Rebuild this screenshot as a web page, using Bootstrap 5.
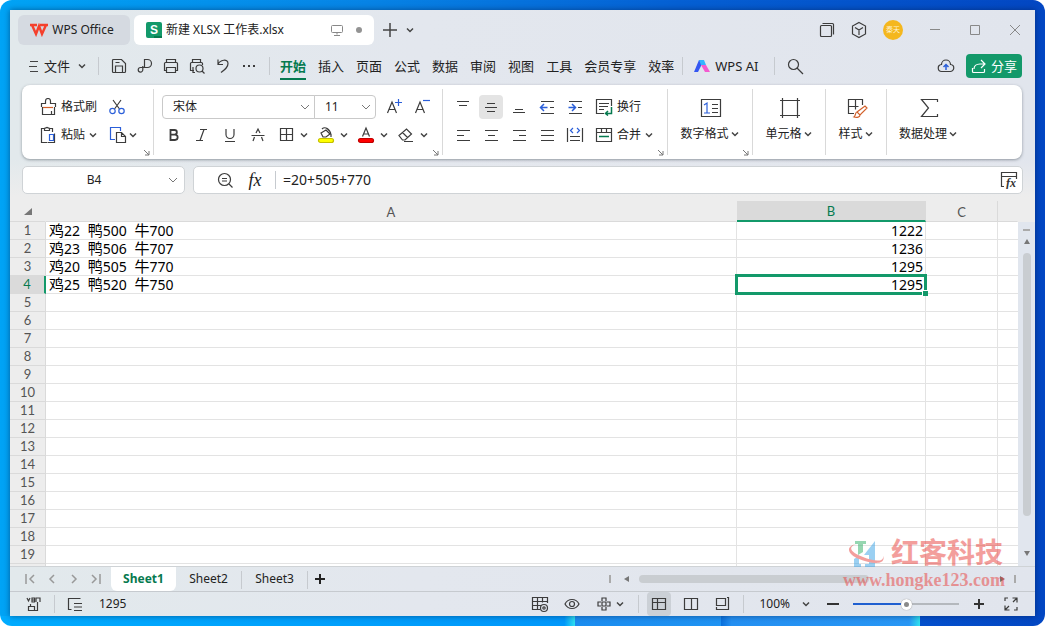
<!DOCTYPE html>
<html lang="zh-CN">
<head>
<meta charset="utf-8">
<meta name="viewport" content="width=device-width, initial-scale=1">
<title>新建 XLSX 工作表.xlsx</title>
<link href="https://cdn.jsdelivr.net/npm/bootstrap@5.3.0/dist/css/bootstrap.min.css" rel="stylesheet">
<style>
  :root { --green:#13996a; --green-dark:#067a4f; --ink:#222; --line:#e3e3e3; --head:#ededed; --blue:#2b5fd9; }
  body { font-family:"Noto Sans","Noto Sans CJK SC",sans-serif; font-size:12px; line-height:18px; color:var(--ink); background:#fff; }
  .desktop { height:100vh; min-height:500px; padding:10px; border-radius:12px;
    background:
      linear-gradient(90deg,#00acff,#0098fb 54%,#2fe0f0 55%,#1b8df0 55%,#1f93f3 69%,#0a70dd 69%,#2490f2 70%,#2897f5 87%,#2fe0f0 88%,#0450cd 88%,#0347c3) bottom/100% 10px no-repeat,
      linear-gradient(90deg,#00a4f6,#0784e6 35%,#0560d4 65%,#0347c3); }
  .appwin { background:linear-gradient(90deg,#e2e9ec,#e3e7ee 40%,#e1e5ed); box-shadow:0 0 6px rgba(0,20,60,.5); }
  .appwin > :not(.sheetwrap) { flex-shrink:0; }
  .tb { border:0; background:none; padding:0; color:inherit; display:inline-flex; align-items:center; justify-content:center; border-radius:4px; flex:none; }
  .sq { width:24px; height:24px; }
  .on { background:#e4e4e4; }
  svg { flex:none; display:block; }
  .ic { width:18px; height:18px; fill:none; stroke:#3c3c3c; stroke-width:1.2; }
  .ic .b { stroke:var(--blue); } .ic .g { stroke:var(--green-dark); } .ic .o { stroke:#d2602a; }
  .ca { width:8px; height:8px; fill:none; stroke:#444; stroke-width:1.5; }
  .cabox { width:12px; display:flex; justify-content:center; }
  .vr-line { width:1px; height:18px; background:#c6cacf; flex:none; }

  .titlebar { height:40px; padding-left:8px; }
  .home-tab { height:30px; width:112px; background:#d5dae1; border-radius:6px; }
  .file-tab { height:30px; width:240px; background:#fff; border-radius:6px; padding:0 12px; }
  .dot { width:6px; height:6px; border-radius:50%; background:#939393; }
  .avatar { width:20px; height:20px; border-radius:50%; background:#f4b71e; color:#fff3cf; font-size:7px; line-height:20px; }
  .winbtn { width:40px; height:30px; }

  .menubar { height:34px; padding:0 13px 2px 18px; font-size:13px; }
  .menubar .nav-link { padding:0; color:var(--ink); line-height:24px; position:relative; white-space:nowrap; }
  .menubar .nav-link.active { color:var(--green-dark); font-weight:700; }
  .menubar .nav-link.active::after { content:""; position:absolute; left:0; right:0; bottom:-2px; height:2px; background:var(--green-dark); }
  .file-line { margin:0 8px 0 12px; }
  .quick { gap:2px; }
  .quick-line { margin:0 10px 0 8px; }
  .ribbon-tabs { gap:12px; }
  .ai-line { margin:0 10px 0 8px; }
  .share { width:56px; height:24px; background:var(--green); color:#fff; gap:4px; font-size:13px; }

  .ribbon { margin:1px 13px 0 12px; height:74px; background:#fff; border-radius:8px; box-shadow:0 1px 3px rgba(60,70,80,.5); }
  .grp { position:relative; display:flex; flex-direction:column; gap:4px; padding-top:10px; }
  .grp:not(:last-child)::after { content:""; position:absolute; right:0; top:4px; height:66px; width:1px; background:#d9d9d9; }
  .grp .line { display:flex; align-items:center; height:24px; gap:4px; }
  .g1 { width:132px; padding-left:17px; } .g2 { width:289px; padding-left:8px; } .g3 { width:225px; padding-left:8px; }
  .g4 { width:85px; } .g5 { width:73px; } .g6 { width:61px; } .g7 { width:84px; }
  .launch { position:absolute; right:4px; bottom:3px; width:7px; height:7px; fill:none; stroke:#777; }
  .big { flex-direction:column; gap:4px; height:48px; }
  .big svg.ic { width:22px; height:26px; }
  .fsel { height:24px; border:1px solid #c9c9c9; font-size:12px; padding:0 20px 0 10px; color:var(--ink); border-radius:4px;
    background-position:right 4px center; background-size:10px 10px;
    background-image:url("data:image/svg+xml,%3Csvg xmlns='http://www.w3.org/2000/svg' viewBox='0 0 10 10'%3E%3Cpath d='M1 3l4 4 4-4' fill='none' stroke='%23777'/%3E%3C/svg%3E"); }
  .f-name { width:153px; border-radius:4px 0 0 4px; }
  .f-size { width:62px; border-radius:0 4px 4px 0; margin:0 2px 0 -5px; }

  .fbar { padding:7px 12px 7px 12px; background:linear-gradient(180deg,rgba(237,237,237,0),#ededed 90%); }
  .fbox { height:28px; background:#fff; border:1px solid #cfd3d6; border-radius:5px; }
  .fbox input { border:0; padding:0; background:none; box-shadow:none; color:var(--ink); min-height:0; outline:0; }
  .namebox { width:163px; }
  .namebox input { font-size:12px; text-align:center; width:142px; }
  .formula { padding-left:19px; }
  .formula input { font-size:14px; line-height:20px; }
  .fnx { font:italic 400 18px/20px "Liberation Serif",serif; margin:0 8px 0 6px; }
  .fx-line { margin-right:7px; }

  .sheetwrap { background:#fff; overflow:hidden; min-height:0; }
  .gridt { table-layout:fixed; width:100%; border-collapse:separate; border-spacing:0; }
  .c-head { width:36px; } .c-b { width:189px; } .c-c { width:72px; } .c-d { width:20px; }
  .gridt th { background:var(--head); font:400 13px/17px Lato,sans-serif; color:#555; text-align:center; padding:0; border-right:1px solid #dadada; border-bottom:1px solid #dadada; }
  .gridt thead th { height:21px; line-height:18px; padding-top:1px; }
  .gridt thead th.nb { border-right-color:var(--head); }
  .gridt thead th.sel { background:#dadada; color:var(--green-dark); border-bottom:2px solid var(--green); }
  .gridt tbody th.sel { background:#dadada; color:var(--green-dark); border-right:2px solid var(--green); }
  .gridt td { height:18px; padding:1px 2px 0 3px; border-right:1px solid var(--line); border-bottom:1px solid var(--line); font-size:14px; line-height:16px; color:#000; white-space:nowrap; }
  .gridt td:last-child { border-right:0; }
  .gridt .han { font-size:15px; line-height:0; }
  .gridt tr.stub th, .gridt tr.stub td { height:2px; padding:0; line-height:0; border-bottom:0; }
  .cursor { position:relative; }
  .cursor::before { content:""; position:absolute; inset:-2px; border:3px solid var(--green); }
  .cursor::after { content:""; position:absolute; right:-3px; bottom:-3px; width:6px; height:6px; background:var(--green); border:1px solid #fff; border-width:1px 0 0 1px; }
  .vcol { width:17px; flex:none; margin-top:21px; background:#e1e6ee; padding:2px 0 8px; box-shadow:0 -21px 0 var(--head); }
  .vthumb { width:8px; margin:8px 0 34px; }
  .thumb { background:#c9cdd1; border-radius:4px; }

  .sheetbar { height:25px; border-top:1px solid #cfd3d6; }
  .pagers { width:101px; height:24px; padding-left:14px; gap:10px; }
  .pagers path { fill:none; stroke:#999; stroke-width:1.5; }
  .stab { height:24px; font-size:12px; line-height:24px; color:var(--ink); text-decoration:none; width:65px; text-align:center; }
  .stab.cur { background:#fff; color:var(--green-dark); font-weight:700; border-radius:0 0 6px 6px; }
  .hscroll { width:407px; height:24px; margin-right:19px; }
  .hleft { margin:0 8px 0 12px; } .hthumb { width:230px; height:8px; }
  .status { height:25px; border-top:1px solid #c6cacf; padding:0 12px; }
  .views { gap:8px; }
  .views .vr-line:first-of-type { margin-left:6px; }
  .on2 { background:#cbd0d6; }
  .zoomset { margin-left:15px; gap:8px; }
  .zc { margin:0 3px 0 12px; }
  .zoomr { -webkit-appearance:none; appearance:none; width:106px; height:12px; background:linear-gradient(90deg,#1f5fd0 50%,#b4b8bd 50%) center/100% 2px no-repeat; margin:0; }
  .zoomr::-webkit-slider-thumb { -webkit-appearance:none; width:11px; height:11px; border-radius:50%; background:#8a8a8a; border:3px solid #fff; box-shadow:0 0 1px #777; }

  .watermark { position:absolute; right:30px; bottom:26px; opacity:.5; color:#e8403c; pointer-events:none; }
  .wm-name { font:700 28px/32px "Liberation Serif","Noto Sans CJK SC",sans-serif; padding-right:2px; }
  .wm-url { font:700 18px/20px "Liberation Serif",serif; }
</style>
</head>
<body>
<div class="desktop">
<main class="appwin h-100 d-flex flex-column position-relative">

  <header class="titlebar d-flex align-items-center gap-1">
    <button class="tb home-tab gap-1 pe-1"><svg width="18" height="14" viewBox="0 0 18 14"><path d="M0 2h7M10 2h8M2 2l4 9 3-8 3 8 4-9" fill="none" stroke="#f5402c" stroke-width="2.400"/></svg>WPS Office</button>
    <div class="file-tab d-flex align-items-center">
      <svg width="16" height="16" viewBox="0 0 16 16"><rect width="16" height="16" rx="2" fill="#13996a"/><path d="M8 16v-2h8v2z" fill="#067a4f"/><text x="8" y="12" text-anchor="middle" font-family="Liberation Sans" font-weight="700" font-size="12" fill="#fff">S</text></svg>
      <span class="ms-1">新建 XLSX 工作表.xlsx</span>
      <svg class="ms-auto me-2" width="14" height="14" viewBox="0 0 14 14" fill="none" stroke="#888"><path d="M2.500 2.500h9a1 1 0 0 1 1 1v5a1 1 0 0 1-1 1h-9a1 1 0 0 1-1-1v-5a1 1 0 0 1 1-1zM7 9.500v2M4 12.500h6"/></svg>
      <span class="dot ms-1"></span>
    </div>
    <button class="tb sq" aria-label="新建标签"><svg width="16" height="16" viewBox="0 0 16 16"><path d="M8 1v14M1 8h14" stroke="#444" stroke-width="1.500"/></svg></button>
    <button class="tb" aria-label="标签列表"><svg class="ca" viewBox="0 0 8 8"><path d="M1 2.500l3 3 3-3"/></svg></button>
    <div class="ms-auto d-flex align-items-center gap-2">
      <button class="tb sq" aria-label="窗口"><svg class="ic" viewBox="0 0 18 18"><rect x="2.500" y="4.500" width="11" height="11" rx="1"/><path d="M4.500 2.500h10a1 1 0 0 1 1 1v10"/></svg></button>
      <button class="tb sq" aria-label="应用"><svg class="ic" viewBox="0 0 18 18"><path d="M9 1.500l6.500 3.500v8L9 16.500 2.500 13V5zM5 6.500L9 9l4-2.500M9 9v5"/></svg></button>
      <span class="avatar text-center ms-1">秦天</span>
    </div>
    <div class="d-flex ps-1 ms-1">
      <button class="tb winbtn" aria-label="最小化"><svg width="12" height="12" viewBox="0 0 12 12"><path d="M1 5.500h10" stroke="#888"/></svg></button>
      <button class="tb winbtn" aria-label="最大化"><svg width="12" height="12" viewBox="0 0 12 12"><path d="M1.500 1.500h9v9h-9z" fill="none" stroke="#888"/></svg></button>
      <button class="tb winbtn" aria-label="关闭"><svg width="12" height="12" viewBox="0 0 12 12"><path d="M1 1l10 10M11 1L1 11" stroke="#888"/></svg></button>
    </div>
  </header>

  <nav class="menubar d-flex align-items-center">
    <button class="tb gap-1"><svg width="12" height="14" viewBox="0 0 12 14" stroke="#444"><path d="M2 2.500h8M1 7.500h8M2 12.500h8"/></svg>文件<svg class="ca ms-1" viewBox="0 0 8 8"><path d="M1 2.500l3 3 3-3"/></svg></button>
    <span class="vr-line file-line"></span>
    <div class="d-flex quick">
      <button class="tb sq" aria-label="保存"><svg class="ic" viewBox="0 0 18 18"><path d="M2.500 3.500a1 1 0 0 1 1-1h8l4 4v8a1 1 0 0 1-1 1h-11a1 1 0 0 1-1-1zM5.500 15v-6h7v6M5.500 5.500h4"/></svg></button>
      <button class="tb sq" aria-label="输出"><svg class="ic" viewBox="0 0 18 18"><path d="M8.500 10V2.500h3a3.500 3.500 0 0 1 0 8H4.500a2.300 2.300 0 1 0 2.300 2.300V9"/></svg></button>
      <button class="tb sq" aria-label="打印"><svg class="ic" viewBox="0 0 18 18"><path d="M4.500 6V2.500h9V6M4.500 13.500h-2v-7a1 1 0 0 1 1-1h11a1 1 0 0 1 1 1v7h-2M4.500 10.500h9v5h-9z"/></svg></button>
      <button class="tb sq" aria-label="打印预览"><svg class="ic" viewBox="0 0 18 18"><path d="M4.500 6V2.500h8V6M6 13.500H2.500v-7a1 1 0 0 1 1-1h10a1 1 0 0 1 1 1V8M5 10v5.500h2M14 14l2.500 2.500"/><circle cx="11.500" cy="11.500" r="3.500"/></svg></button>
      <button class="tb sq" aria-label="撤销"><svg class="ic" viewBox="0 0 18 18"><path d="M4 2.500v5h5M4 7.500c2-5 10-6 10-1 0 4-3 6-7 9"/></svg></button>
      <button class="tb sq" aria-label="更多"><svg class="ic" viewBox="0 0 18 18"><path d="M3 9h2M8 9h2M13 9h2" stroke-width="2"/></svg></button>
    </div>
    <span class="vr-line quick-line"></span>
    <div class="nav flex-nowrap ribbon-tabs">
      <a class="nav-link active" href="#">开始</a><a class="nav-link" href="#">插入</a><a class="nav-link" href="#">页面</a><a class="nav-link" href="#">公式</a><a class="nav-link" href="#">数据</a><a class="nav-link" href="#">审阅</a><a class="nav-link" href="#">视图</a><a class="nav-link" href="#">工具</a><a class="nav-link" href="#">会员专享</a><a class="nav-link" href="#">效率</a>
    </div>
    <span class="vr-line ai-line"></span>
    <button class="tb gap-1"><svg width="18" height="14" viewBox="0 0 18 14"><path d="M1 13L6 1h5L5 13z" fill="#3557f2"/><path d="M6 1h5l2 5H8z" fill="#35b4ff"/><path d="M8 6h5l4 7h-5z" fill="#f45ad0"/></svg>WPS AI</button>
    <span class="vr-line ms-3 me-2"></span>
    <button class="tb sq" aria-label="搜索"><svg class="ic" viewBox="0 0 18 18"><circle cx="7.500" cy="7.500" r="5"/><path d="M11 11l6 6"/></svg></button>
    <button class="tb sq ms-auto me-2" aria-label="云同步"><svg class="ic" viewBox="0 0 18 18"><path d="M5 14.500a3.500 3.500 0 0 1-.5-7 4.500 4.500 0 0 1 9 0 3.500 3.500 0 0 1-.5 7z"/><path class="b" d="M9 13V7.500M6.500 10L9 7.500l2.500 2.500" stroke-width="1.500"/></svg></button>
    <button class="tb share"><svg width="16" height="16" viewBox="0 0 16 16" fill="none" stroke="#fff" stroke-width="1.200"><path d="M10 2l4 4-4 4M14 6H9c-4 0-6 2-6 5M1.500 10v3.500a1 1 0 0 0 1 1h10a1 1 0 0 0 1-1V11"/></svg>分享</button>
  </nav>

  <section class="ribbon d-flex" aria-label="开始">
    <div class="grp g1">
      <div class="line"><button class="tb gap-1"><svg class="ic" viewBox="0 0 18 18"><path d="M2.500 9V5.500h4V3a1.500 1.500 0 0 1 5 0v2.500h5V9M3.500 9v7.500h12V9M12.500 13v3"/><path class="o" d="M4 9.500h10"/></svg>格式刷</button>
        <button class="tb sq ms-1" aria-label="剪切"><svg class="ic" viewBox="0 0 18 18"><path d="M5 2l6.500 9M13 2l-6.500 9"/><circle class="b" cx="4.500" cy="13" r="2.700"/><circle class="b" cx="13.500" cy="13" r="2.700"/></svg></button></div>
      <div class="line"><button class="tb gap-1"><svg class="ic" viewBox="0 0 18 18"><path d="M5 2.500H2.500v14H8M11 2.500h2.500V6M5.500 4.500v-2L8 1.500l2.500 1v2zM8.500 16.500h7v-9"/><path class="b" d="M10.500 8.500h4v6h-4z"/></svg>粘贴<svg class="ca" viewBox="0 0 8 8"><path d="M1 2.500l3 3 3-3"/></svg></button>
        <button class="tb ms-2" aria-label="复制"><svg class="ic" viewBox="0 0 18 18"><path class="b" d="M6 13.500H1.500v-12h10V5"/><path d="M7.500 6.500h5l4 4v6h-9zM12.500 6.500v4h4"/></svg><span class="cabox"><svg class="ca" viewBox="0 0 8 8"><path d="M1 2.500l3 3 3-3"/></svg></span></button></div>
      <svg class="launch" viewBox="0 0 7 7"><path d="M1 1l5 5M6 2v4H2"/></svg>
    </div>
    <div class="grp g2">
      <div class="line">
        <select class="form-select fsel f-name" aria-label="字体"><option>宋体</option></select>
        <select class="form-select fsel f-size" aria-label="字号"><option>11</option></select>
        <button class="tb sq" aria-label="增大字号"><svg class="ic" viewBox="0 0 18 18"><path d="M2.500 15L7 4l4.500 11M4 11.500h6"/><path class="b" d="M13.500 1v7M10 4.500h7"/></svg></button>
        <button class="tb sq" aria-label="减小字号"><svg class="ic" viewBox="0 0 18 18"><path d="M2.500 15L7 4l4.500 11M4 11.500h6"/><path class="b" d="M10 2.500h7"/></svg></button>
      </div>
      <div class="line">
        <button class="tb sq" aria-label="加粗"><svg class="ic" viewBox="0 0 18 18"><path d="M5.500 4h4a2.300 2.300 0 0 1 0 4.700h-4zM5.500 8.700h4.500a2.600 2.600 0 0 1 0 5.300H5.500z" stroke-width="1.800"/></svg></button>
        <button class="tb sq" aria-label="斜体"><svg class="ic" viewBox="0 0 18 18"><path d="M7 3.500h7M3 14.500h7M11 3.500l-4 11"/></svg></button>
        <button class="tb sq" aria-label="下划线"><svg class="ic" viewBox="0 0 18 18"><path d="M5 3v5.500a4 4 0 0 0 8 0V3M4 15.500h10"/></svg></button>
        <button class="tb sq" aria-label="删除线"><svg class="ic" viewBox="0 0 18 18"><path d="M7 7l2-4 2 4M2.500 9.500h13M5.500 11L4 15M12.500 11l1.500 4"/></svg></button>
        <button class="tb" aria-label="边框"><span class="tb sq"><svg class="ic" viewBox="0 0 18 18"><path d="M3.500 2.500h12v12h-12zM3.500 8.500h12M9.500 2.500v12"/></svg></span><span class="cabox"><svg class="ca" viewBox="0 0 8 8"><path d="M1 2.500l3 3 3-3"/></svg></span></button>
        <button class="tb" aria-label="填充颜色"><span class="tb sq"><svg class="ic" viewBox="0 0 18 18"><path d="M5 3c3-3 8 0 9 6M4 7l5-3 4 4-4 3H6zM14 8v3"/><rect x="1.500" y="12.500" width="15" height="4" rx="2" fill="#ff0" stroke="#c5c000"/></svg></span><span class="cabox"><svg class="ca" viewBox="0 0 8 8"><path d="M1 2.500l3 3 3-3"/></svg></span></button>
        <button class="tb" aria-label="字体颜色"><span class="tb sq"><svg class="ic" viewBox="0 0 18 18"><path d="M5.500 10.500L9 2l3.500 8.500M6.500 8h5"/><rect x="1.500" y="12.500" width="15" height="4" rx="2" fill="#f00" stroke="#c00000"/></svg></span><span class="cabox"><svg class="ca" viewBox="0 0 8 8"><path d="M1 2.500l3 3 3-3"/></svg></span></button>
        <button class="tb" aria-label="清除"><span class="tb sq"><svg class="ic" viewBox="0 0 18 18"><path d="M2 9.500L9.500 3l5 5L8 14H5.500zM5.500 6.500l5 5M7 15.500h9"/></svg></span><span class="cabox"><svg class="ca" viewBox="0 0 8 8"><path d="M1 2.500l3 3 3-3"/></svg></span></button>
      </div>
      <svg class="launch" viewBox="0 0 7 7"><path d="M1 1l5 5M6 2v4H2"/></svg>
    </div>
    <div class="grp g3">
      <div class="line">
        <button class="tb sq" aria-label="顶端对齐"><svg class="ic" viewBox="0 0 18 18"><path d="M3 3.500h12M5 7.500h8"/></svg></button>
        <button class="tb sq on" aria-label="垂直居中"><svg class="ic" viewBox="0 0 18 18"><path d="M5 5.500h8M3 9.500h12M5 13.500h8"/></svg></button>
        <button class="tb sq" aria-label="底端对齐"><svg class="ic" viewBox="0 0 18 18"><path d="M5 11.500h8M3 14.500h12"/></svg></button>
        <button class="tb sq" aria-label="减少缩进"><svg class="ic" viewBox="0 0 18 18"><path d="M3 3.500h13M12 9.500h4M3 15.500h13"/><path class="b" d="M9.500 9.500H3M6 6L2.500 9.500 6 13" stroke-width="1.500"/></svg></button>
        <button class="tb sq" aria-label="增加缩进"><svg class="ic" viewBox="0 0 18 18"><path d="M3 3.500h13M12 9.500h4M3 15.500h13"/><path class="b" d="M2.500 9.500H9M6 6l3.500 3.500L6 13" stroke-width="1.500"/></svg></button>
        <button class="tb gap-1 ms-1"><svg class="ic" viewBox="0 0 18 18"><path d="M9 15.500H1.500v-14h15V8M4 5.500h10M4 8.500h9M4 11.500h5"/><path class="g" d="M16.500 9v6.500h-5M13 13l-2.500 2.500L13 17.500" stroke-width="1.500"/></svg>换行</button>
      </div>
      <div class="line">
        <button class="tb sq" aria-label="左对齐"><svg class="ic" viewBox="0 0 18 18"><path d="M3 4.500h13M3 9.500h7M3 14.500h13"/></svg></button>
        <button class="tb sq" aria-label="居中"><svg class="ic" viewBox="0 0 18 18"><path d="M3 4.500h13M6 9.500h7M3 14.500h13"/></svg></button>
        <button class="tb sq" aria-label="右对齐"><svg class="ic" viewBox="0 0 18 18"><path d="M3 4.500h13M9 9.500h7M3 14.500h13"/></svg></button>
        <button class="tb sq" aria-label="两端对齐"><svg class="ic" viewBox="0 0 18 18"><path d="M3 4.500h13M3 9.500h13M3 14.500h13"/></svg></button>
        <button class="tb sq" aria-label="分散对齐"><svg class="ic" viewBox="0 0 18 18"><path d="M1.500 2v14M16.500 2v14M4 10.500h10M4 14.500h10"/><path class="b" d="M7 2L4.500 4.500 7 7M11 2l2.500 2.500L11 7"/></svg></button>
        <button class="tb gap-1 ms-1"><svg class="ic" viewBox="0 0 18 18"><path d="M1.500 2.500h15v13h-15zM1.500 6.500h15M6.500 2.500v4M11.500 2.500v4"/><path class="g" d="M4 10.500h10" stroke-width="1.500"/></svg>合并<svg class="ca" viewBox="0 0 8 8"><path d="M1 2.500l3 3 3-3"/></svg></button>
      </div>
      <svg class="launch" viewBox="0 0 7 7"><path d="M1 1l5 5M6 2v4H2"/></svg>
    </div>
    <div class="grp g4"><button class="tb big"><svg class="ic" viewBox="0 0 22 26"><path d="M1.500 4.500h19v17h-19zM12 9.500h6M12 13.500h6M12 17.500h6"/><path class="b" d="M4 10l3-2v10M4 18h6"/></svg><span class="d-flex align-items-center">数字格式<span class="cabox"><svg class="ca" viewBox="0 0 8 8"><path d="M1 2.500l3 3 3-3"/></svg></span></span></button><svg class="launch" viewBox="0 0 7 7"><path d="M1 1l5 5M6 2v4H2"/></svg></div>
    <div class="grp g5"><button class="tb big"><svg class="ic" viewBox="0 0 22 26"><path d="M3.500 3v20M18.500 3v20M1 5.500h20M1 20.500h20"/></svg><span class="d-flex align-items-center">单元格<span class="cabox"><svg class="ca" viewBox="0 0 8 8"><path d="M1 2.500l3 3 3-3"/></svg></span></span></button></div>
    <div class="grp g6"><button class="tb big"><svg class="ic" viewBox="0 0 22 26"><path d="M8 18.500H2.500v-14h14V10M2.500 11.500h10M9.500 4.500v10"/><path class="o" d="M11 17l8-6 2 2-7 7zM11 17c-2 0-1 4-3 5 3 1 6 0 6-2"/></svg><span class="d-flex align-items-center">样式<span class="cabox"><svg class="ca" viewBox="0 0 8 8"><path d="M1 2.500l3 3 3-3"/></svg></span></span></button></div>
    <div class="grp g7"><button class="tb big"><svg class="ic" viewBox="0 0 22 26"><path d="M19.500 7V4.500h-16l7 8.500-7 8.500h16V19"/></svg><span class="d-flex align-items-center">数据处理<span class="cabox"><svg class="ca" viewBox="0 0 8 8"><path d="M1 2.500l3 3 3-3"/></svg></span></span></button></div>
  </section>

  <section class="fbar d-flex gap-2">
    <div class="fbox namebox d-flex align-items-center"><input class="form-control" value="B4" aria-label="名称框"><button class="tb ms-auto me-1" aria-label="展开名称"><svg width="14" height="10" viewBox="0 0 14 10" fill="none" stroke="#777"><path d="M3 3l4 4 4-4"/></svg></button></div>
    <div class="fbox formula flex-fill d-flex align-items-center pe-1">
      <button class="tb sq" aria-label="查找"><svg class="ic" viewBox="0 0 18 18"><circle cx="8.500" cy="8.500" r="6"/><path d="M6 7.500h5M6 10h5M13 13l3.500 3.500"/></svg></button>
      <button class="tb sq fnx" aria-label="插入函数">fx</button>
      <span class="vr-line fx-line"></span>
      <input class="form-control flex-fill" value="=20+505+770" aria-label="编辑栏">
      <button class="tb" aria-label="函数面板"><svg class="ic" viewBox="0 0 18 18"><path d="M4 15.500H1.500v-14h15V8M1.500 5.500h15"/><text x="6" y="16" font-family="Liberation Serif" font-style="italic" font-weight="700" font-size="12" fill="#333" stroke="none">fx</text></svg></button>
    </div>
  </section>

  <section class="sheetwrap flex-fill d-flex">
    <div class="flex-fill overflow-hidden">
      <table class="gridt">
        <colgroup><col class="c-head"><col><col class="c-b"><col class="c-c"><col class="c-d"></colgroup>
        <thead><tr><th class="nb" aria-label="全选"><svg class="mx-auto" width="9" height="8" viewBox="0 0 9 8"><path d="M9 0v7H1z" fill="#777"/></svg></th><th class="nb">A</th><th class="sel">B</th><th>C</th><th class="nb"></th></tr></thead>
        <tbody id="rows">
          <tr><th>1</th><td><span class="me-1"><span class="han">鸡</span>22</span> <span class="me-1"><span class="han">鸭</span>500</span> <span class="han">牛</span>700</td><td class="text-end">1222</td><td></td><td></td></tr>
          <tr><th>2</th><td><span class="me-1"><span class="han">鸡</span>23</span> <span class="me-1"><span class="han">鸭</span>506</span> <span class="han">牛</span>707</td><td class="text-end">1236</td><td></td><td></td></tr>
          <tr><th>3</th><td><span class="me-1"><span class="han">鸡</span>20</span> <span class="me-1"><span class="han">鸭</span>505</span> <span class="han">牛</span>770</td><td class="text-end">1295</td><td></td><td></td></tr>
          <tr><th class="sel">4</th><td><span class="me-1"><span class="han">鸡</span>25</span> <span class="me-1"><span class="han">鸭</span>520</span> <span class="han">牛</span>750</td><td class="text-end cursor">1295</td><td></td><td></td></tr>
        </tbody>
      </table>
    </div>
    <div class="vcol d-flex flex-column align-items-center">
      <svg width="9" height="9" viewBox="0 0 9 9"><path d="M1 6h7" stroke="#aaa" stroke-width="2"/></svg>
      <svg class="mt-1" width="8" height="8" viewBox="0 0 8 8"><path d="M1 7l3-5 3 5z" fill="#777"/></svg>
      <div class="thumb vthumb flex-fill"></div>
      <svg width="8" height="8" viewBox="0 0 8 8"><path d="M1 1l3 5 3-5z" fill="#777"/></svg>
    </div>
  </section>

  <section class="sheetbar d-flex align-items-start">
    <div class="pagers d-flex align-items-center">
      <button class="tb" aria-label="第一张"><svg width="12" height="10" viewBox="0 0 12 10"><path d="M2 0v10M10 1L6 5l4 4"/></svg></button>
      <button class="tb" aria-label="上一张"><svg width="12" height="10" viewBox="0 0 12 10"><path d="M8 1L4 5l4 4"/></svg></button>
      <button class="tb" aria-label="下一张"><svg width="12" height="10" viewBox="0 0 12 10"><path d="M4 1l4 4-4 4"/></svg></button>
      <button class="tb" aria-label="最后一张"><svg width="12" height="10" viewBox="0 0 12 10"><path d="M10 0v10M2 1l4 4-4 4"/></svg></button>
    </div>
    <a class="stab cur" href="#">Sheet1</a><a class="stab" href="#">Sheet2</a><span class="vr-line mt-1"></span><a class="stab" href="#">Sheet3</a><span class="vr-line mt-1"></span>
    <button class="tb sq" aria-label="新建工作表"><svg width="12" height="12" viewBox="0 0 12 12"><path d="M6 1v10M1 6h10" stroke="#222" stroke-width="2"/></svg></button>
    <div class="hscroll d-flex align-items-center ms-auto">
      <svg width="2" height="8" viewBox="0 0 2 8"><path d="M1 0v8" stroke="#aaa" stroke-width="2"/></svg>
      <svg class="hleft" width="8" height="8" viewBox="0 0 8 8"><path d="M6 1L1 4l5 3z" fill="#777"/></svg>
      <div class="thumb hthumb"></div>
      <svg class="ms-auto" width="8" height="8" viewBox="0 0 8 8"><path d="M2 1l5 3-5 3z" fill="#777"/></svg>
      <svg class="ms-2" width="2" height="8" viewBox="0 0 2 8"><path d="M1 0v8" stroke="#aaa" stroke-width="2"/></svg>
    </div>
  </section>

  <footer class="status d-flex align-items-center">
    <button class="tb sq" aria-label="宏"><svg class="ic" viewBox="0 0 18 18"><path d="M2 3l1.500 3L5 3M7 3h2.500v4H7zM7 5h2M11 7V3h4v4M5.500 9v3M12.500 7v8.500h-9v-4h6v4"/></svg></button>
    <span class="vr-line mx-2"></span>
    <button class="tb sq" aria-label="统计"><svg class="ic" viewBox="0 0 18 18"><path d="M14.500 3.500h-12v11h3M8 8.500h8M8 12h8M8 15.500h8"/></svg></button>
    <span class="ms-2 ps-1">1295</span>
    <div class="ms-auto d-flex align-items-center views">
      <button class="tb sq" aria-label="表格设置"><svg class="ic" viewBox="0 0 18 18"><path d="M9 14.500H1.500v-12h15V8M1.500 6.500h15M1.500 10.500H10M6.500 2.500v12M11.500 2.500v5"/><circle cx="13" cy="13" r="3.500"/><circle cx="13" cy="13" r="1.200"/></svg></button>
      <button class="tb sq" aria-label="护眼模式"><svg class="ic" viewBox="0 0 18 18"><path d="M2 9c3-6 11-6 14 0-3 6-11 6-14 0z"/><circle cx="9" cy="9" r="2.500"/></svg></button>
      <button class="tb" aria-label="阅读模式"><span class="tb sq"><svg class="ic" viewBox="0 0 18 18"><path d="M7 6V3h4v3M7 12v3h4v-3M6 7H3v4h3M12 7h3v4h-3M7 7h4v4H7z"/></svg></span><svg class="ca" viewBox="0 0 8 8"><path d="M1 2.500l3 3 3-3"/></svg></button>
      <span class="vr-line"></span>
      <button class="tb sq on2" aria-label="普通视图"><svg class="ic" viewBox="0 0 18 18"><path d="M2.500 3.500h13v11h-13zM2.500 7.500h13M7.500 3.500v11"/></svg></button>
      <button class="tb sq" aria-label="分页预览"><svg class="ic" viewBox="0 0 18 18"><path d="M2.500 3.500h13v11h-13zM9.500 3.500v11"/></svg></button>
      <button class="tb sq" aria-label="页面布局"><svg class="ic" viewBox="0 0 18 18"><path d="M2.500 3.500h9v7h-9zM2.500 12v2.500h12v-12H13"/></svg></button>
      <span class="vr-line"></span>
    </div>
    <div class="d-flex align-items-center zoomset">
      <button class="tb">100%<svg class="ca zc" viewBox="0 0 8 8"><path d="M1 2.500l3 3 3-3"/></svg></button>
      <button class="tb sq" aria-label="缩小"><svg width="12" height="12" viewBox="0 0 12 12"><path d="M0 6h12" stroke="#333" stroke-width="2"/></svg></button>
      <input class="zoomr" type="range" min="0" max="100" value="50" aria-label="显示比例">
      <button class="tb sq" aria-label="放大"><svg width="12" height="12" viewBox="0 0 12 12"><path d="M6 1v10M1 6h10" stroke="#333" stroke-width="2"/></svg></button>
      <button class="tb sq" aria-label="全屏"><svg class="ic" viewBox="0 0 18 18"><path d="M3 6V3h3M10.500 3H15v4.500M15 3l-4 4M3 10.500V15h4.500M3 15l4-4M12 15h3v-3"/></svg></button>
    </div>
  </footer>

  <div class="watermark">
    <div class="d-flex align-items-center justify-content-end gap-1">
      <svg width="40" height="30" viewBox="0 0 40 30"><path d="M8 2h11v3h-3v8l-5 3V5H8z" fill="#2fae66"/><path d="M7 28V20l5-3v8h2v3zM28 2v26H18v-3h4v-9h-5L28 2z" fill="#39a3e6"/><path d="M9 5C-3 8 2 16 12 20s28 8 24-4c2 8-10 6-20 2S-1 9 9 5z" fill="#e8403c"/></svg>
      <span class="wm-name">红客科技</span>
    </div>
    <div class="wm-url">www.hongke123.com</div>
  </div>
</main>
</div>
<script src="https://cdn.jsdelivr.net/npm/bootstrap@5.3.0/dist/js/bootstrap.bundle.min.js"></script>
<script>
  const rows = document.getElementById('rows');
  for (let n = 5; n <= 19; n++) rows.insertAdjacentHTML('beforeend', `<tr><th>${n}</th><td></td><td></td><td></td><td></td></tr>`);
  rows.insertAdjacentHTML('beforeend', '<tr class="stub"><th></th><td></td><td></td><td></td><td></td></tr>');
</script>
</body>
</html>
